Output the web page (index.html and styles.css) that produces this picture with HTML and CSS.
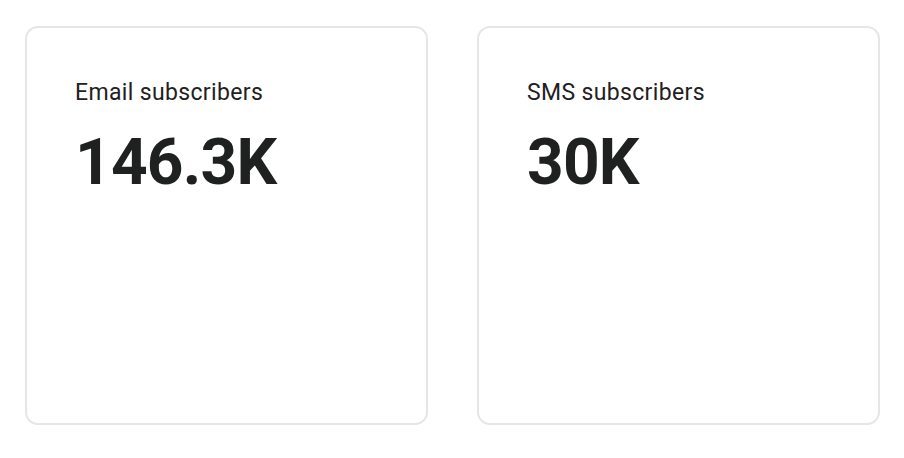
FILE: index.html
```html
<!DOCTYPE html>
<html lang="en">
<head>
    <meta charset="UTF-8">
    <meta name="viewport" content="width=device-width, initial-scale=1.0">
    <title>Subscribers</title>
    <link rel="stylesheet" href="styles.css">
</head>
<body>
    <div class="cards">
        <div class="card">
            <div class="card-label">Email subscribers</div>
            <div class="card-value">146.3K</div>
        </div>
        <div class="card">
            <div class="card-label">SMS subscribers</div>
            <div class="card-value">30K</div>
        </div>
    </div>
</body>
</html>
```

FILE: styles.css
```css
body {
    font-family: Roboto, 'Noto Sans', sans-serif;
    margin: 0;
    padding: 0;
    background: #fff;
    color: #1f2121;
}
.cards {
    display: grid;
    grid-template-columns: 403px 403px;
    gap: 49px;
    padding: 26px 24px 33px 25px;
}
.card {
    height: 399px;
    box-sizing: border-box;
    border: 2px solid #e6e6e6;
    border-radius: 13px;
    padding: 52px 48px;
}
.card-label {
    font-size: 23px;
    line-height: 26px;
    font-weight: 400;
    letter-spacing: 0.35px;
}
.card-value {
    margin-top: 19px;
    font-size: 64px;
    line-height: 75px;
    font-weight: 700;
    letter-spacing: -0.8px;
}
```
